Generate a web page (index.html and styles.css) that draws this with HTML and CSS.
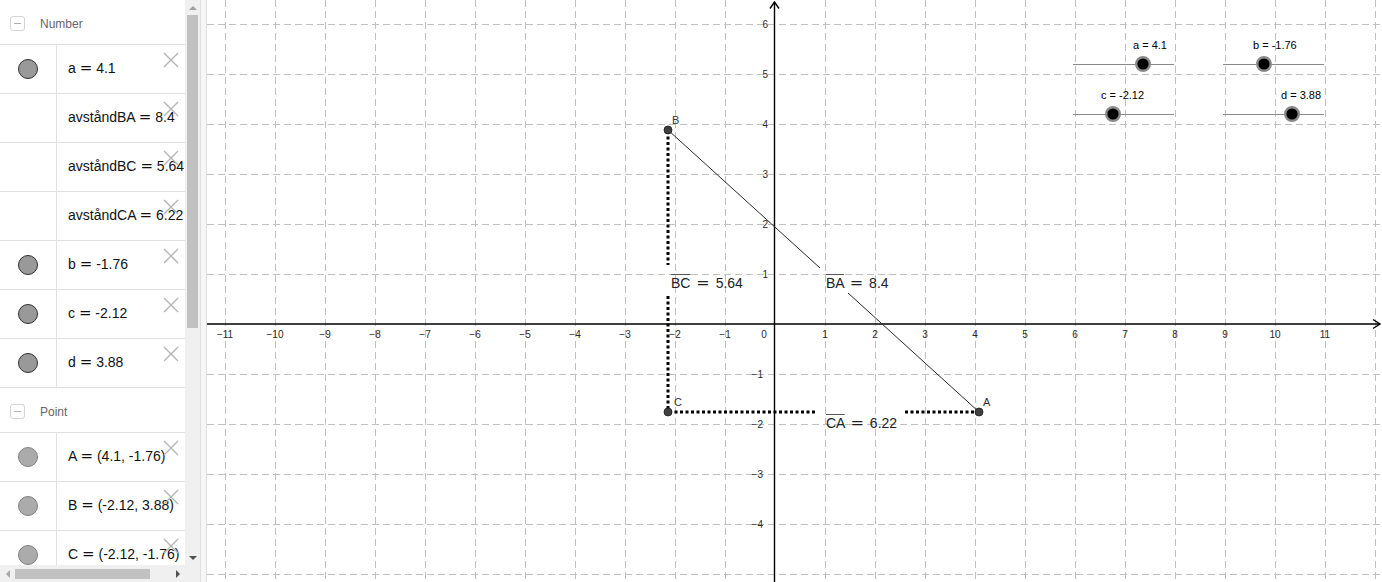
FILE: index.html
```html
<!DOCTYPE html>
<html>
<head>
<meta charset="utf-8">
<link rel="stylesheet" href="styles.css">
</head>
<body>
<div class="app">
  <aside class="algebra">
    <div class="list">
      <div class="group-head"><span class="toggle"></span><span class="group-name">Number</span></div>
      <div class="item"><div class="marker"><span class="dot num"></span></div><div class="expr">a <span class="eq">=</span> 4.1</div><svg class="del" viewBox="0 0 16 16"><path d="M1 1L15 15M15 1L1 15"/></svg></div>
      <div class="item"><div class="marker"></div><div class="expr">avståndBA <span class="eq">=</span> 8.4</div><svg class="del" viewBox="0 0 16 16"><path d="M1 1L15 15M15 1L1 15"/></svg></div>
      <div class="item"><div class="marker"></div><div class="expr">avståndBC <span class="eq">=</span> 5.64</div><svg class="del" viewBox="0 0 16 16"><path d="M1 1L15 15M15 1L1 15"/></svg></div>
      <div class="item"><div class="marker"></div><div class="expr">avståndCA <span class="eq">=</span> 6.22</div><svg class="del" viewBox="0 0 16 16"><path d="M1 1L15 15M15 1L1 15"/></svg></div>
      <div class="item"><div class="marker"><span class="dot num"></span></div><div class="expr">b <span class="eq">=</span> -1.76</div><svg class="del" viewBox="0 0 16 16"><path d="M1 1L15 15M15 1L1 15"/></svg></div>
      <div class="item"><div class="marker"><span class="dot num"></span></div><div class="expr">c <span class="eq">=</span> -2.12</div><svg class="del" viewBox="0 0 16 16"><path d="M1 1L15 15M15 1L1 15"/></svg></div>
      <div class="item"><div class="marker"><span class="dot num"></span></div><div class="expr">d <span class="eq">=</span> 3.88</div><svg class="del" viewBox="0 0 16 16"><path d="M1 1L15 15M15 1L1 15"/></svg></div>
      <div class="group-head"><span class="toggle"></span><span class="group-name">Point</span></div>
      <div class="item"><div class="marker"><span class="dot pt"></span></div><div class="expr">A <span class="eq">=</span> (4.1, -1.76)</div><svg class="del" viewBox="0 0 16 16"><path d="M1 1L15 15M15 1L1 15"/></svg></div>
      <div class="item"><div class="marker"><span class="dot pt"></span></div><div class="expr">B <span class="eq">=</span> (-2.12, 3.88)</div><svg class="del" viewBox="0 0 16 16"><path d="M1 1L15 15M15 1L1 15"/></svg></div>
      <div class="item"><div class="marker"><span class="dot pt"></span></div><div class="expr">C <span class="eq">=</span> (-2.12, -1.76)</div><svg class="del" viewBox="0 0 16 16"><path d="M1 1L15 15M15 1L1 15"/></svg></div>
    </div>
    <div class="vscroll">
      <div class="sbtn"><span class="arr up"></span></div>
      <div class="vtrack"><div class="vthumb"></div></div>
      <div class="sbtn"><span class="arr down"></span></div>
    </div>
    <div class="hscroll">
      <div class="hbtn"><span class="arr left"></span></div>
      <div class="htrack"><div class="hthumb"></div></div>
      <div class="hbtn"><span class="arr right"></span></div>
    </div>
    <div class="corner"></div>
  </aside>
  <div class="divider"></div>
  <main class="graph">
    <svg class="canvas" width="1175" height="582" viewBox="0 0 1175 582">
      <path class="grid" d="M18.5 0V582M68.5 0V582M118.5 0V582M168.5 0V582M218.5 0V582M268.5 0V582M318.5 0V582M368.5 0V582M418.5 0V582M468.5 0V582M518.5 0V582M618.5 0V582M668.5 0V582M718.5 0V582M768.5 0V582M818.5 0V582M868.5 0V582M918.5 0V582M968.5 0V582M1018.5 0V582M1068.5 0V582M1118.5 0V582M1168.5 0V582"/>
      <path class="grid" d="M0 24.5H1175M0 74.5H1175M0 124.5H1175M0 174.5H1175M0 224.5H1175M0 274.5H1175M0 374.5H1175M0 424.5H1175M0 474.5H1175M0 524.5H1175M0 574.5H1175"/>
      <path class="axis" d="M0 324H1173M567.5 582V2"/>
      <path class="axis" d="M1166 319.5L1173 324L1166 328.5M563 8.5L567.5 2L572 8.5"/>
      <g class="xl">
        <text x="18" y="338">−11</text><text x="68" y="338">−10</text><text x="118" y="338">−9</text><text x="168" y="338">−8</text><text x="218" y="338">−7</text><text x="268" y="338">−6</text><text x="318" y="338">−5</text><text x="368" y="338">−4</text><text x="418" y="338">−3</text><text x="468" y="338">−2</text><text x="518" y="338">−1</text><text x="557" y="338">0</text><text x="618" y="338">1</text><text x="668" y="338">2</text><text x="718" y="338">3</text><text x="768" y="338">4</text><text x="818" y="338">5</text><text x="868" y="338">6</text><text x="918" y="338">7</text><text x="968" y="338">8</text><text x="1018" y="338">9</text><text x="1068" y="338">10</text><text x="1118" y="338">11</text>
      </g>
      <g class="yl">
        <text x="561" y="28">6</text><text x="561" y="78">5</text><text x="561" y="128">4</text><text x="561" y="178">3</text><text x="561" y="228">2</text><text x="561" y="278">1</text><text x="556" y="378">−1</text><text x="556" y="428">−2</text><text x="556" y="478">−3</text><text x="556" y="528">−4</text>
      </g>
      <path class="seg" d="M461 130L613 268M641 293L772 412"/>
      <path class="dotted" d="M461 131V265M461 296V412M462 412H610M698 412H771"/>
      <circle class="pnt" cx="461" cy="130" r="4"/>
      <circle class="pnt" cx="461" cy="412" r="4"/>
      <circle class="pnt" cx="772" cy="412" r="4"/>
      <g class="plab">
        <text x="465" y="124">B</text><text x="467" y="406">C</text><text x="776" y="406">A</text>
      </g>
      <g class="slider">
        <path class="track" d="M866 64.5H967M1016 64.5H1117M866 114.5H967M1016 114.5H1117"/>
        <circle class="knob" cx="936" cy="64" r="6.8"/>
        <circle class="knob" cx="1057" cy="64" r="6.8"/>
        <circle class="knob" cx="906" cy="114" r="6.8"/>
        <circle class="knob" cx="1085" cy="114" r="6.8"/>
        <text x="926" y="49">a = 4.1</text>
        <text x="1046" y="49">b = -1.76</text>
        <text x="894" y="99">c = -2.12</text>
        <text x="1074" y="99">d = 3.88</text>
      </g>
    </svg>
    <div class="mlabel lbl-bc"><span class="ol">BC</span> <span class="eq">=</span> 5.64</div>
    <div class="mlabel lbl-ba"><span class="ol">BA</span> <span class="eq">=</span> 8.4</div>
    <div class="mlabel lbl-ca"><span class="ol">CA</span> <span class="eq">=</span> 6.22</div>
  </main>
</div>
</body>
</html>
```

FILE: styles.css
```css
* { box-sizing: border-box; }
html, body {
  margin: 0;
  padding: 0;
  background: #fff;
  font-family: "Liberation Sans", Arial, sans-serif;
  color: #111;
  overflow: hidden;
}
.app {
  display: flex;
  width: 1382px;
  height: 582px;
}
.algebra {
  width: 200px;
  flex: none;
  display: grid;
  grid-template-columns: 185px 15px;
  grid-template-rows: 565px 17px;
  background: #fff;
}
.list {
  overflow: hidden;
  position: relative;
}
.group-head {
  height: 45px;
  border-bottom: 1px solid #e0e0e0;
  display: flex;
  align-items: center;
  padding-left: 10px;
  padding-top: 3px;
}
.toggle {
  width: 15px;
  height: 15px;
  border: 1px solid #d4d4d4;
  border-radius: 3px;
  position: relative;
  margin-right: 15px;
}
.toggle::after {
  content: "";
  position: absolute;
  left: 3px;
  top: 6px;
  width: 7px;
  height: 1px;
  background: #b0b0b0;
}
.group-name {
  font-size: 12px;
  color: #666;
}
.item {
  height: 49px;
  border-bottom: 1px solid #e0e0e0;
  display: flex;
  position: relative;
}
.marker {
  width: 57px;
  flex: none;
  border-right: 1px solid #e0e0e0;
  display: flex;
  align-items: center;
  justify-content: center;
  padding-right: 1px;
}
.dot {
  width: 20px;
  height: 20px;
  border-radius: 50%;
}
.dot.num {
  background: #999;
  border: 1px solid #2f2f2f;
}
.dot.pt {
  background: #ababab;
  border: 1px solid #808080;
}
.expr {
  display: block;
  padding-left: 11px;
  line-height: 47px;
  font-size: 14px;
  white-space: nowrap;
  color: #111;
}
.expr .eq {
  font-family: "DejaVu Sans", sans-serif;
  font-size: 15px;
  line-height: 1;
}
.del {
  position: absolute;
  right: 6px;
  top: 7px;
  width: 16px;
  height: 16px;
  fill: none;
  stroke: #b4b4b4;
  stroke-width: 1.4;
}
.vscroll {
  background: #f0f0f0;
  display: flex;
  flex-direction: column;
  padding-left: 2px;
  padding-right: 2px;
}
.sbtn {
  height: 15px;
  display: flex;
  align-items: center;
  justify-content: center;
  flex: none;
}
.vtrack {
  flex: 1;
}
.vthumb {
  height: 313px;
  background: #c1c1c1;
}
.hscroll {
  background: #f0f0f0;
  display: flex;
  align-items: center;
}
.hbtn {
  width: 15px;
  height: 17px;
  display: flex;
  align-items: center;
  justify-content: center;
  flex: none;
}
.htrack {
  flex: 1;
  height: 10px;
}
.hthumb {
  width: 135px;
  height: 10px;
  background: #c1c1c1;
}
.corner {
  background: #f0f0f0;
}
.arr {
  width: 0;
  height: 0;
  border-style: solid;
  border-color: transparent;
}
.arr.up { border-width: 0 4px 4px 4px; border-bottom-color: #a0a0a0; }
.arr.down { border-width: 4px 4px 0 4px; border-top-color: #505050; }
.arr.left { border-width: 4px 4px 4px 0; border-right-color: #a8a8a8; }
.arr.right { border-width: 4px 0 4px 4px; border-left-color: #505050; }
.divider {
  width: 7px;
  flex: none;
  background: #f6f6f6;
  border-left: 1px solid #dedede;
  border-right: 1px solid #dedede;
}
.graph {
  flex: 1;
  position: relative;
  overflow: hidden;
}
.canvas {
  display: block;
}
.grid {
  fill: none;
  stroke: #c0c0c0;
  stroke-width: 1;
  stroke-dasharray: 7 4;
}
.axis {
  fill: none;
  stroke: #000;
  stroke-width: 1.4;
}
.xl text, .yl text {
  font-family: "Liberation Sans", Arial, sans-serif;
  font-size: 10px;
  fill: #2a2a2a;
}
.xl text { text-anchor: middle; }
.yl text { text-anchor: end; }
.seg {
  fill: none;
  stroke: #2a2a2a;
  stroke-width: 1;
}
.dotted {
  fill: none;
  stroke: #000;
  stroke-width: 3;
  stroke-dasharray: 3 2.5;
}
.pnt {
  fill: #404040;
  stroke: #1a1a1a;
  stroke-width: 0.8;
}
.plab text {
  font-family: "Liberation Sans", Arial, sans-serif;
  font-size: 11px;
  fill: #333;
}
.slider .track {
  fill: none;
  stroke: #8a8a8a;
  stroke-width: 1;
}
.slider .knob {
  fill: #000;
  stroke: #8a8a8a;
  stroke-width: 2.4;
}
.slider text {
  font-family: "Liberation Sans", Arial, sans-serif;
  font-size: 11px;
  fill: #000;
}
.mlabel {
  position: absolute;
  font-size: 14px;
  line-height: 18px;
  color: #222;
  white-space: pre;
}
.mlabel .ol {
  text-decoration: overline;
  text-decoration-thickness: 1px;
  text-decoration-color: #555;
}
.mlabel .eq {
  font-family: "DejaVu Sans", sans-serif;
  font-size: 16px;
  line-height: 1;
  margin: 0 2px;
}
.lbl-bc { left: 464px; top: 274px; }
.lbl-ba { left: 619px; top: 274px; }
.lbl-ca { left: 619px; top: 414px; }
```
